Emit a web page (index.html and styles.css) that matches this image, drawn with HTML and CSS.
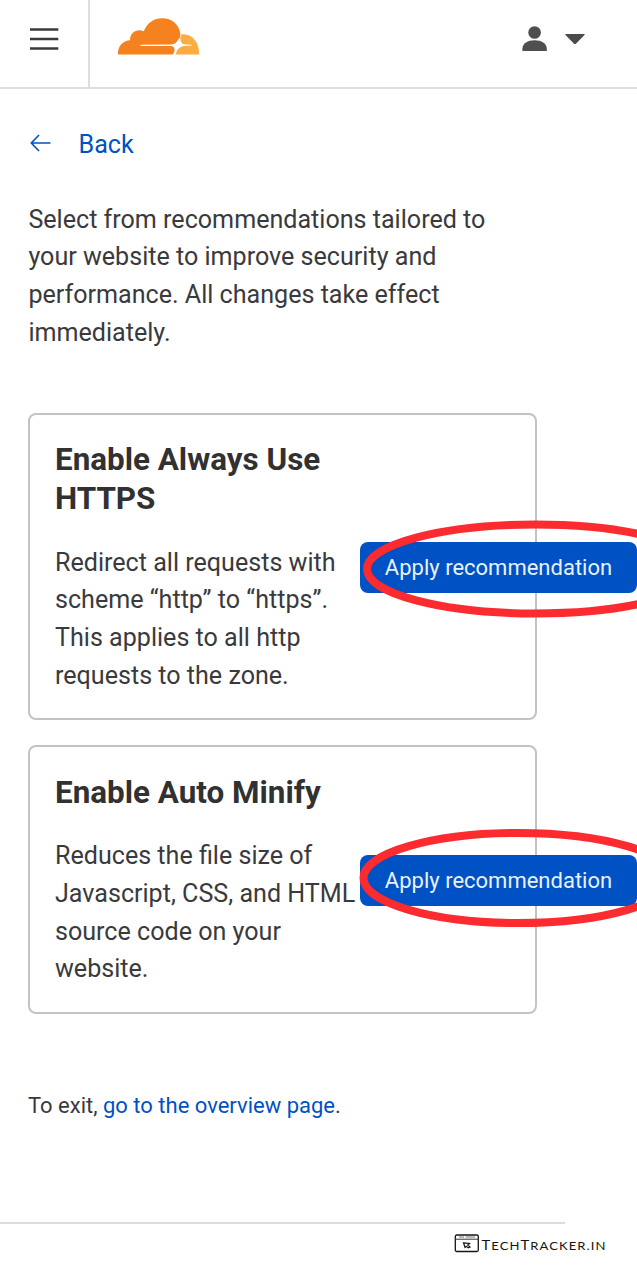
FILE: index.html
```html
<!DOCTYPE html>
<html lang="en">
<head>
<meta charset="utf-8">
<title>Recommendations</title>
<link rel="stylesheet" href="styles.css">
</head>
<body>
<header class="topbar">
  <div class="menu">
    <svg width="30" height="24" viewBox="0 0 30 24" stroke="#3b3b3d" stroke-width="2.4"><path d="M1 2.5H29.3M1 12H29.3M1 21.5H29.3"/></svg>
  </div>
  <svg class="logo" width="82" height="37" viewBox="0 0 82 37">
    <path fill="#f6821f" d="M0 36.600C-.6 28.800 4.500 22.700 12.200 22.300C11.500 15.500 18.300 9.800 25.700 13.200C29.500 4.600 36 .3 44.300 .3C53.500 .3 60.900 6.200 62.300 15.400C62.500 20.900 59.400 26.100 54 26.400L22.500 26.800V28H53C57.600 28.100 57.400 33.400 54.600 36.600Z"/>
    <path fill="#fbad41" d="M63.300 16.500C73.400 15 81.300 23.700 81.200 36.600H57.800C58.500 31.200 62 28.400 66.500 28L73.500 27.500V26.700L67 26.300C62 25.900 61.700 20.600 63.300 16.500Z"/>
    <path fill="#fff" d="M60.500 20.500Q61 25.500 66 27.200Q60 28.500 58 34Q57 28.600 52.500 27.300Q58.500 26.500 60.500 20.500Z"/>
  </svg>
  <div class="account">
    <svg width="26" height="26" viewBox="0 0 26 26" fill="#4f4f51"><circle cx="12.600" cy="6.500" r="6.300"/><path d="M.4 25V22.500C.9 17.300 5.500 14.300 12.600 14.300S24.300 17.300 24.800 22.500V25Z"/></svg>
    <svg width="22" height="13" viewBox="0 0 22 13" fill="#4b4b4d"><path d="M1.700 1H20.300Q21.200 1.300 20.500 2L12.200 10.500Q11 11.500 9.800 10.500L1.500 2Q.8 1.300 1.700 1Z"/></svg>
  </div>
</header>
<main class="content">
  <a class="back"><svg width="21" height="18" viewBox="0 0 21 18" fill="none" stroke="#0051c3" stroke-width="1.600"><path d="M20.500 9H1.500M9 1L1.300 9L9 17"/></svg><span>Back</span></a>
  <p class="intro">Select from recommendations tailored to your website to improve security and performance. All changes take effect immediately.</p>
  <section class="card">
    <div class="copy">
      <h2>Enable Always Use HTTPS</h2>
      <p>Redirect all requests with<br>scheme “http” to “https”.<br>This applies to all http<br>requests to the zone.</p>
    </div>
    <button class="apply">Apply recommendation</button>
  </section>
  <section class="card">
    <div class="copy">
      <h2>Enable Auto Minify</h2>
      <p>Reduces the file size of<br>Javascript, CSS, and HTML<br>source code on your<br>website.</p>
    </div>
    <button class="apply">Apply recommendation</button>
  </section>
  <p class="exit">To exit, <a>go to the overview page</a>.</p>
</main>
<footer class="footer">
  <svg width="153" height="20" viewBox="0 0 153 20">
    <rect x="1.300" y="1" width="23" height="16.500" rx="1.500" fill="#fff" stroke="#151515" stroke-width="1.300"/>
    <path d="M1.500 5.200H24.500" stroke="#333" stroke-width="1"/>
    <path d="M5 3H10M11.500 3H21" stroke="#777" stroke-width="1.200"/>
    <path d="M9.500 8.800L15.500 9.500L13.800 11L16 13L14.300 13.900L12.300 12.300L11 13.500Z" fill="none" stroke="#151515" stroke-width="1.200"/>
    <text class="brand" x="27.500" y="16.300" textLength="125" lengthAdjust="spacingAndGlyphs"><tspan class="cap">T</tspan>ECH<tspan class="cap">T</tspan>RACKER.IN</text>
  </svg>
</footer>
<svg class="marks" width="637" height="1280" viewBox="0 0 637 1280" fill="none" stroke="#fb2b30" stroke-width="8">
  <ellipse cx="535" cy="569" rx="168" ry="44.500"/>
  <ellipse cx="518" cy="878" rx="154.500" ry="45"/>
</svg>
</body>
</html>
```
FILE: styles.css
```css
* { box-sizing: border-box; }
body {
  margin: 0;
  position: relative;
  width: 637px;
  height: 1280px;
  overflow: hidden;
  background: #fff;
  color: #3a3a3c;
  font: 25.1px/37.7px Roboto, sans-serif;
}
h2, p { margin: 0; }
a { color: #0051c3; }
.topbar {
  display: flex;
  height: 89px;
  border-bottom: 2px solid #dedede;
}
.menu {
  width: 90px;
  padding: 27px 0 0 29px;
  border-right: 2px solid #dedede;
}
.menu svg, .account svg { display: block; }
.logo { margin: 18px 0 0 28px; }
.account {
  display: flex;
  gap: 16px;
  margin: 26px 51.500px 0 auto;
}
.account svg + svg { margin-top: 7px; }
.content { padding: 36px 100px 0 28px; }
.back {
  display: flex;
  align-items: center;
  gap: 27.500px;
  padding-left: 2px;
}
.back span { padding-top: 1px; margin-bottom: -1px; }
.back svg { margin-top: -1px; }
.intro {
  margin: 38px 0 0 .4px;
}
.card {
  display: flex;
  align-items: center;
  width: 509px;
  height: 307.500px;
  margin-top: 61px;
  padding: 27px 25px 25px;
  border: 2px solid #c3c3c3;
  border-radius: 8px;
}
.card + .card { height: 268.500px; margin-top: 25px; }
.copy { flex: none; width: 305px; }
h2 {
  width: 290px;
  margin-bottom: 25.300px;
  font-size: 31.4px;
  line-height: 39.2px;
  font-weight: 700;
  color: #313132;
}
.apply {
  flex: none;
  width: 277px;
  height: 51px;
  padding: 0;
  border: 0;
  border-radius: 8px;
  background: #0051c3;
  color: #e8f1fc;
  font: 22px/51px Roboto, sans-serif;
}
.exit { margin-top: 73px; font-size: 22px; }
.footer {
  display: flex;
  justify-content: flex-end;
  margin-top: 98px;
  padding: 12px 30px 0 0;
  background: linear-gradient(#dcdcdc, #dcdcdc) 0 0 / 565px 2px no-repeat;
}
.brand { font: 11px Lato, sans-serif; letter-spacing: .9px; fill: #151515; }
.cap { font-size: 12.500px; }
.marks {
  position: absolute;
  top: 0;
  left: 0;
  pointer-events: none;
}
```
